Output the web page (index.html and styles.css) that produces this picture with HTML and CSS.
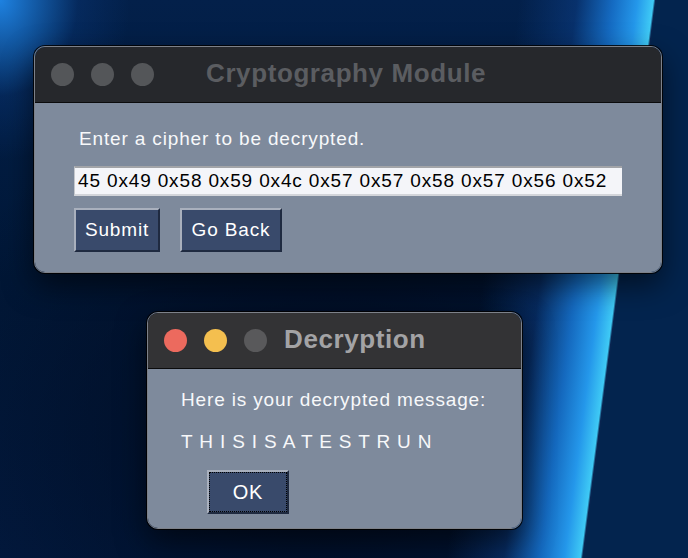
FILE: index.html
```html
<!DOCTYPE html>
<html lang="en">
<head>
<meta charset="utf-8">
<title>Cryptography Module</title>
<link rel="stylesheet" href="styles.css">
</head>
<body>
<div class="desktop">
  <section class="window window-main">
    <header class="titlebar titlebar-inactive">
      <div class="lights">
        <span class="light light-off"></span>
        <span class="light light-off"></span>
        <span class="light light-off"></span>
      </div>
      <h1 class="title title-main">Cryptography Module</h1>
    </header>
    <div class="content content-main">
      <p class="label">Enter a cipher to be decrypted.</p>
      <div class="entry">45 0x49 0x58 0x59 0x4c 0x57 0x57 0x58 0x57 0x56 0x52</div>
      <div class="actions">
        <button class="btn btn-submit">Submit</button>
        <button class="btn btn-back">Go Back</button>
      </div>
    </div>
  </section>

  <section class="window window-dialog">
    <header class="titlebar titlebar-active">
      <div class="lights">
        <span class="light light-red"></span>
        <span class="light light-yellow"></span>
        <span class="light light-off2"></span>
      </div>
      <h1 class="title title-dialog">Decryption</h1>
    </header>
    <div class="content content-dialog">
      <p class="label">Here is your decrypted message:</p>
      <p class="label message">T H I S I S A T E S T R U N</p>
      <button class="btn btn-ok">OK</button>
    </div>
  </section>
</div>
</body>
</html>
```

FILE: styles.css
```css
* { box-sizing: border-box; }

html, body {
  margin: 0;
  padding: 0;
  width: 688px;
  height: 558px;
  overflow: hidden;
}

body {
  font-family: "Liberation Sans", Arial, sans-serif;
  background-color: #021a3d;
}

.desktop {
  position: relative;
  width: 688px;
  height: 558px;
  overflow: hidden;
  background:
    linear-gradient(97.45deg,
      rgba(0,0,0,0) 515px,
      rgba(14,70,150,0.45) 572px,
      rgba(24,120,215,0.85) 608px,
      #2497ea 632px,
      #3fcaf5 648px,
      #0a2450 650px,
      #03244e 651.5px,
      #03244e 100%),
    radial-gradient(ellipse 130px 160px at 0 0, rgba(30,130,225,1), rgba(10,60,130,0.35) 60%, rgba(0,0,0,0) 100%),
    radial-gradient(ellipse 420px 360px at 330px 430px, #000b20, rgba(2,26,61,0) 100%),
    linear-gradient(180deg, #03204a 0%, #011838 50%, #021a40 100%);
}

.window {
  position: absolute;
  display: flex;
  flex-direction: column;
  border-radius: 11px;
  overflow: hidden;
  border: 1px solid #7d8189;
  box-shadow: 0 0 0 1px rgba(0,0,0,0.85), 0 12px 30px rgba(0,0,0,0.55);
}

.window-main {
  left: 34px;
  top: 46px;
  width: 628px;
  height: 227px;
}

.window-dialog {
  left: 147px;
  top: 312px;
  width: 375px;
  height: 217px;
}

.titlebar {
  height: 56px;
  flex: none;
  display: flex;
  align-items: center;
  padding-left: 16px;
  border-bottom: 1px solid #0b0b0c;
}

.titlebar-inactive { background: #26282c; }
.titlebar-active { background: #333335; }

.lights {
  display: flex;
  gap: 17px;
  margin-top: -1px;
}

.light {
  width: 23px;
  height: 23px;
  border-radius: 50%;
}

.light-off { background: #545659; }
.light-off2 { background: #59595b; }
.light-red { background: #ec6a5e; }
.light-yellow { background: #f4bf4f; }

.title {
  margin: -3px 0 0 0;
  font-size: 26px;
  font-weight: bold;
  letter-spacing: 0.6px;
  line-height: 30px;
}

.title-main {
  color: #5b5d61;
  margin-left: 52px;
}

.title-dialog {
  color: #a3a3a5;
  margin-left: 17px;
}

.content {
  flex: 1;
  background: #7e8a9c;
  display: flex;
  flex-direction: column;
  align-items: flex-start;
}

.content-main {
  padding: 25px 0 0 39px;
}

.content-dialog {
  padding: 20px 0 0 33px;
}

.label {
  margin: 0;
  color: #f7f8fa;
  font-size: 19px;
  line-height: 22px;
  letter-spacing: 0.85px;
  padding-left: 5px;
}

.content-dialog .label { padding-left: 0; }

.message {
  margin-top: 20px;
}

.entry {
  margin-top: 16px;
  width: 548px;
  height: 30px;
  background: #f4f5f9;
  border-top: 2px solid #a2a4a8;
  border-left: 1px solid #c4c7cc;
  border-bottom: 2px solid #d3d5da;
  color: #000;
  font-size: 19px;
  letter-spacing: 0.85px;
  line-height: 26px;
  padding-left: 3px;
  white-space: nowrap;
  overflow: hidden;
}

.actions {
  display: flex;
  gap: 20px;
  margin-top: 12px;
}

.btn {
  height: 44px;
  background: #394a6b;
  color: #ffffff;
  font-family: "Liberation Sans", Arial, sans-serif;
  font-size: 19px;
  letter-spacing: 0.85px;
  border-top: 2px solid #a9b0bd;
  border-left: 2px solid #a9b0bd;
  border-right: 2px solid #1f2a40;
  border-bottom: 2px solid #1f2a40;
  padding: 0;
  cursor: default;
}

.btn-submit { width: 86px; }
.btn-back { width: 102px; }

.btn-ok {
  width: 82px;
  margin-top: 17px;
  margin-left: 26px;
  outline: 1px dotted #000;
  outline-offset: -3px;
  font-size: 20px;
}
```
